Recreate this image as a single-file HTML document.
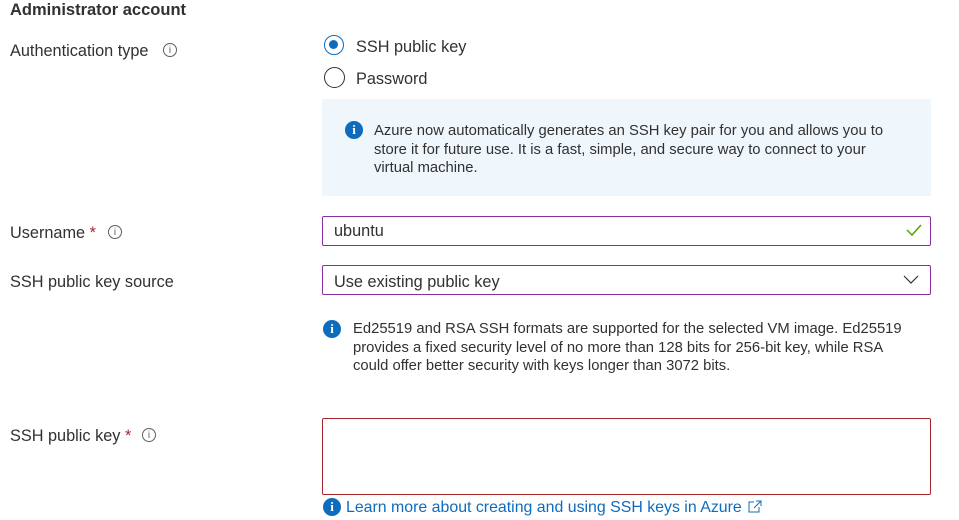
<!DOCTYPE html><html><head><style>
body{margin:0;width:959px;height:520px;background:#fff;font-family:"Liberation Sans",sans-serif;color:#323130;position:relative;overflow:hidden}
.a{position:absolute;white-space:nowrap}
.l{font-size:16.3px}
.t{font-size:14.8px;line-height:18.5px}
.box{position:absolute;border:1px solid #8a2da5;border-radius:2px;box-sizing:border-box}
.ii{position:absolute;width:14px;height:14px;border:1px solid #605e5c;border-radius:50%;font-size:10px;text-align:center;line-height:14px;color:#605e5c;box-sizing:border-box}
.bi{position:absolute;width:18px;height:18px;border-radius:50%;background:#0f6cbd;color:#fff;font-weight:bold;font-size:13px;text-align:center;line-height:18px;font-family:"Liberation Serif",serif}
</style></head><body>
<div class="a" style="left:10px;top:1px;font-size:16.5px;font-weight:bold;color:#323130">Administrator account</div>
<div class="a l" style="left:10px;top:42px">Authentication type</div>
<div class="ii" style="left:163px;top:43px">i</div>
<div class="a" style="left:324px;top:35px;width:20px;height:20px;border:1.5px solid #0f6cbd;border-radius:50%;box-sizing:border-box"><div style="position:absolute;left:4px;top:4px;width:9px;height:9px;border-radius:50%;background:#0f6cbd"></div></div>
<div class="a l" style="left:356px;top:38px">SSH public key</div>
<div class="a" style="left:324px;top:67px;width:21px;height:21px;border:1.5px solid #323130;border-radius:50%;box-sizing:border-box"></div>
<div class="a l" style="left:356px;top:70px">Password</div>
<div class="a" style="left:322px;top:99px;width:609px;height:97px;background:#eff6fc"></div>
<div class="bi" style="left:345px;top:121px">i</div>
<div class="a t" style="left:374px;top:122px">Azure now automatically generates an SSH key pair for you and allows you to<br>store it for future use. It is a fast, simple, and secure way to connect to your<br>virtual machine.</div>
<div class="a l" style="left:10px;top:224px">Username <span style="color:#a4262c">*</span></div>
<div class="ii" style="left:108px;top:225px">i</div>
<div class="box" style="left:322px;top:216px;width:609px;height:30px"></div>
<div class="a l" style="left:334px;top:222px">ubuntu</div>
<svg class="a" style="left:906px;top:223px" width="16" height="14"><path d="M1 7l5 5L15 2" stroke="#57a300" stroke-width="1.5" fill="none"/></svg>
<div class="a l" style="left:10px;top:273px">SSH public key source</div>
<div class="box" style="left:322px;top:265px;width:609px;height:30px"></div>
<div class="a l" style="left:334px;top:273px">Use existing public key</div>
<svg class="a" style="left:903px;top:275px" width="16" height="10"><path d="M1 1l7 7 7-7" stroke="#323130" stroke-width="1.2" fill="none"/></svg>
<div class="bi" style="left:323px;top:320px">i</div>
<div class="a t" style="left:353px;top:320px">Ed25519 and RSA SSH formats are supported for the selected VM image. Ed25519<br>provides a fixed security level of no more than 128 bits for 256-bit key, while RSA<br>could offer better security with keys longer than 3072 bits.</div>
<div class="a l" style="left:10px;top:427px">SSH public key <span style="color:#a4262c">*</span></div>
<div class="ii" style="left:142px;top:428px">i</div>
<div class="box" style="left:322px;top:418px;width:609px;height:77px;border-color:#a4262c"></div>
<div class="bi" style="left:323px;top:498px">i</div>
<div class="a" style="left:346px;top:499px;color:#0f6cbd;font-size:15.9px">Learn more about creating and using SSH keys in Azure</div>
<svg class="a" style="left:748px;top:500px" width="14" height="13"><path d="M6 2H1v10h10V7M8 1h5v5M13 1L6 8" stroke="#0f6cbd" stroke-width="1" fill="none"/></svg>
</body></html>
